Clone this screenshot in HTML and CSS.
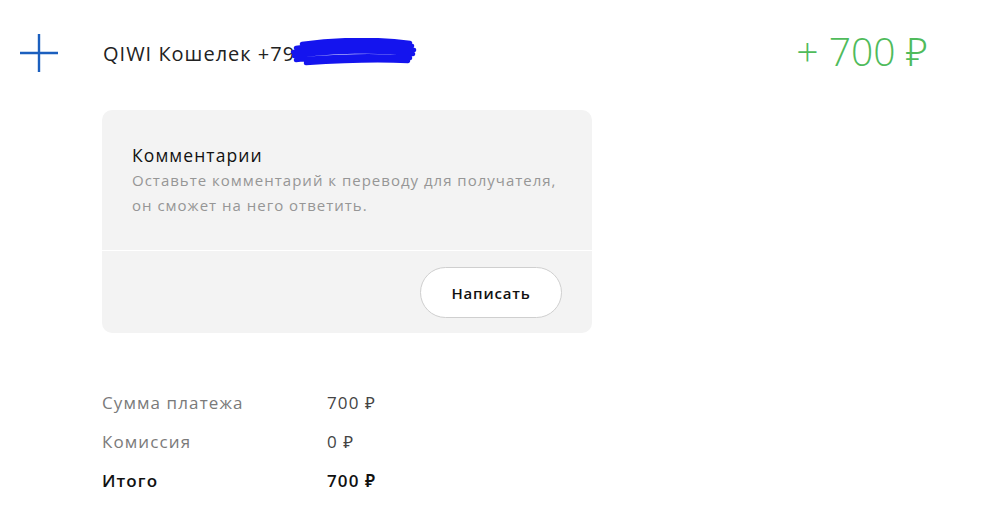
FILE: index.html
```html
<!DOCTYPE html>
<html lang="ru">
<head>
<meta charset="utf-8">
<link rel="stylesheet" href="styles.css">
</head>
<body>
<div class="page">
  <div class="header">
    <div class="icon">
      <svg width="40" height="40" viewBox="0 0 40 40"><path d="M20 1V39M1 20H39" stroke="#1b5fbe" stroke-width="2.4" fill="none"/></svg>
    </div>
    <div class="title">QIWI Кошелек +79<span class="redact"><svg width="128" height="28" viewBox="0 0 128 28"><path d="M12 6C50 1 90 1 120 5M6 10C40 5 80 4 122 8M3 14C40 9 80 8 124 12M4 18C40 13 90 12 123 16M6 22C40 18 90 17 120 20M16 25C60 22 100 22 118 23" stroke="#1414ee" stroke-width="4.5" fill="none" stroke-linecap="round"/></svg></span></div>
    <div class="amount">+ 700 ₽</div>
  </div>
  <div class="card">
    <div class="card-top">
      <div class="card-title">Комментарии</div>
      <div class="card-text">Оставьте комментарий к переводу для получателя,<br>он сможет на него ответить.</div>
    </div>
    <div class="card-bottom">
      <button class="btn">Написать</button>
    </div>
  </div>
  <div class="summary">
    <div class="row"><span class="label">Сумма платежа</span><span class="value">700 ₽</span></div>
    <div class="row"><span class="label">Комиссия</span><span class="value">0 ₽</span></div>
    <div class="row total"><span class="label">Итого</span><span class="value">700 ₽</span></div>
  </div>
</div>
</body>
</html>
```
FILE: styles.css
```css
html, body { margin: 0; padding: 0; background: #fff; }
body { font-family: "Open Sans", "Noto Sans", sans-serif; color: #1a1a1a; }
.page { width: 993px; height: 523px; overflow: hidden; }
.header { display: flex; align-items: center; height: 40px; padding: 33px 0 0 19px; }
.icon { width: 40px; height: 40px; }
.icon svg { display: block; }
.title { margin-left: 44px; font-size: 20px; position: relative; letter-spacing: 1px; color: #222; }
.redact { position: absolute; left: 187px; top: -2px; }
.amount { margin: -5px 65px 0 auto; font-size: 39px; line-height: 40px; color: #4fbb5b; font-weight: 300; }
.card { margin: 37px 0 0 102px; width: 490px; background: #f3f3f3; border-radius: 10px; overflow: hidden; }
.card-top { padding: 33px 30px 32px 30px; border-bottom: 1px solid #fff; }
.card-title { font-size: 17.5px; color: #111; line-height: 24px; letter-spacing: 1.1px; }
.card-text { font-size: 15px; color: #969696; line-height: 25px; margin-top: 1px; letter-spacing: 1px; }
.card-bottom { display: flex; justify-content: flex-end; padding: 16px 30px 15px; }
.btn { width: 142px; height: 51px; border-radius: 26px; background: #fff; border: 1px solid #cfcfcf; font-family: inherit; font-size: 15px; font-weight: 600; color: #111; letter-spacing: 0.8px; }
.summary { margin: 50px 0 0 102px; }
.row { display: flex; font-size: 17px; line-height: 39px; color: #7a7a7a; letter-spacing: 1.1px; }
.label { width: 225px; }
.value { color: #444; }
.total .label, .total .value { color: #111; font-weight: 600; }
```
